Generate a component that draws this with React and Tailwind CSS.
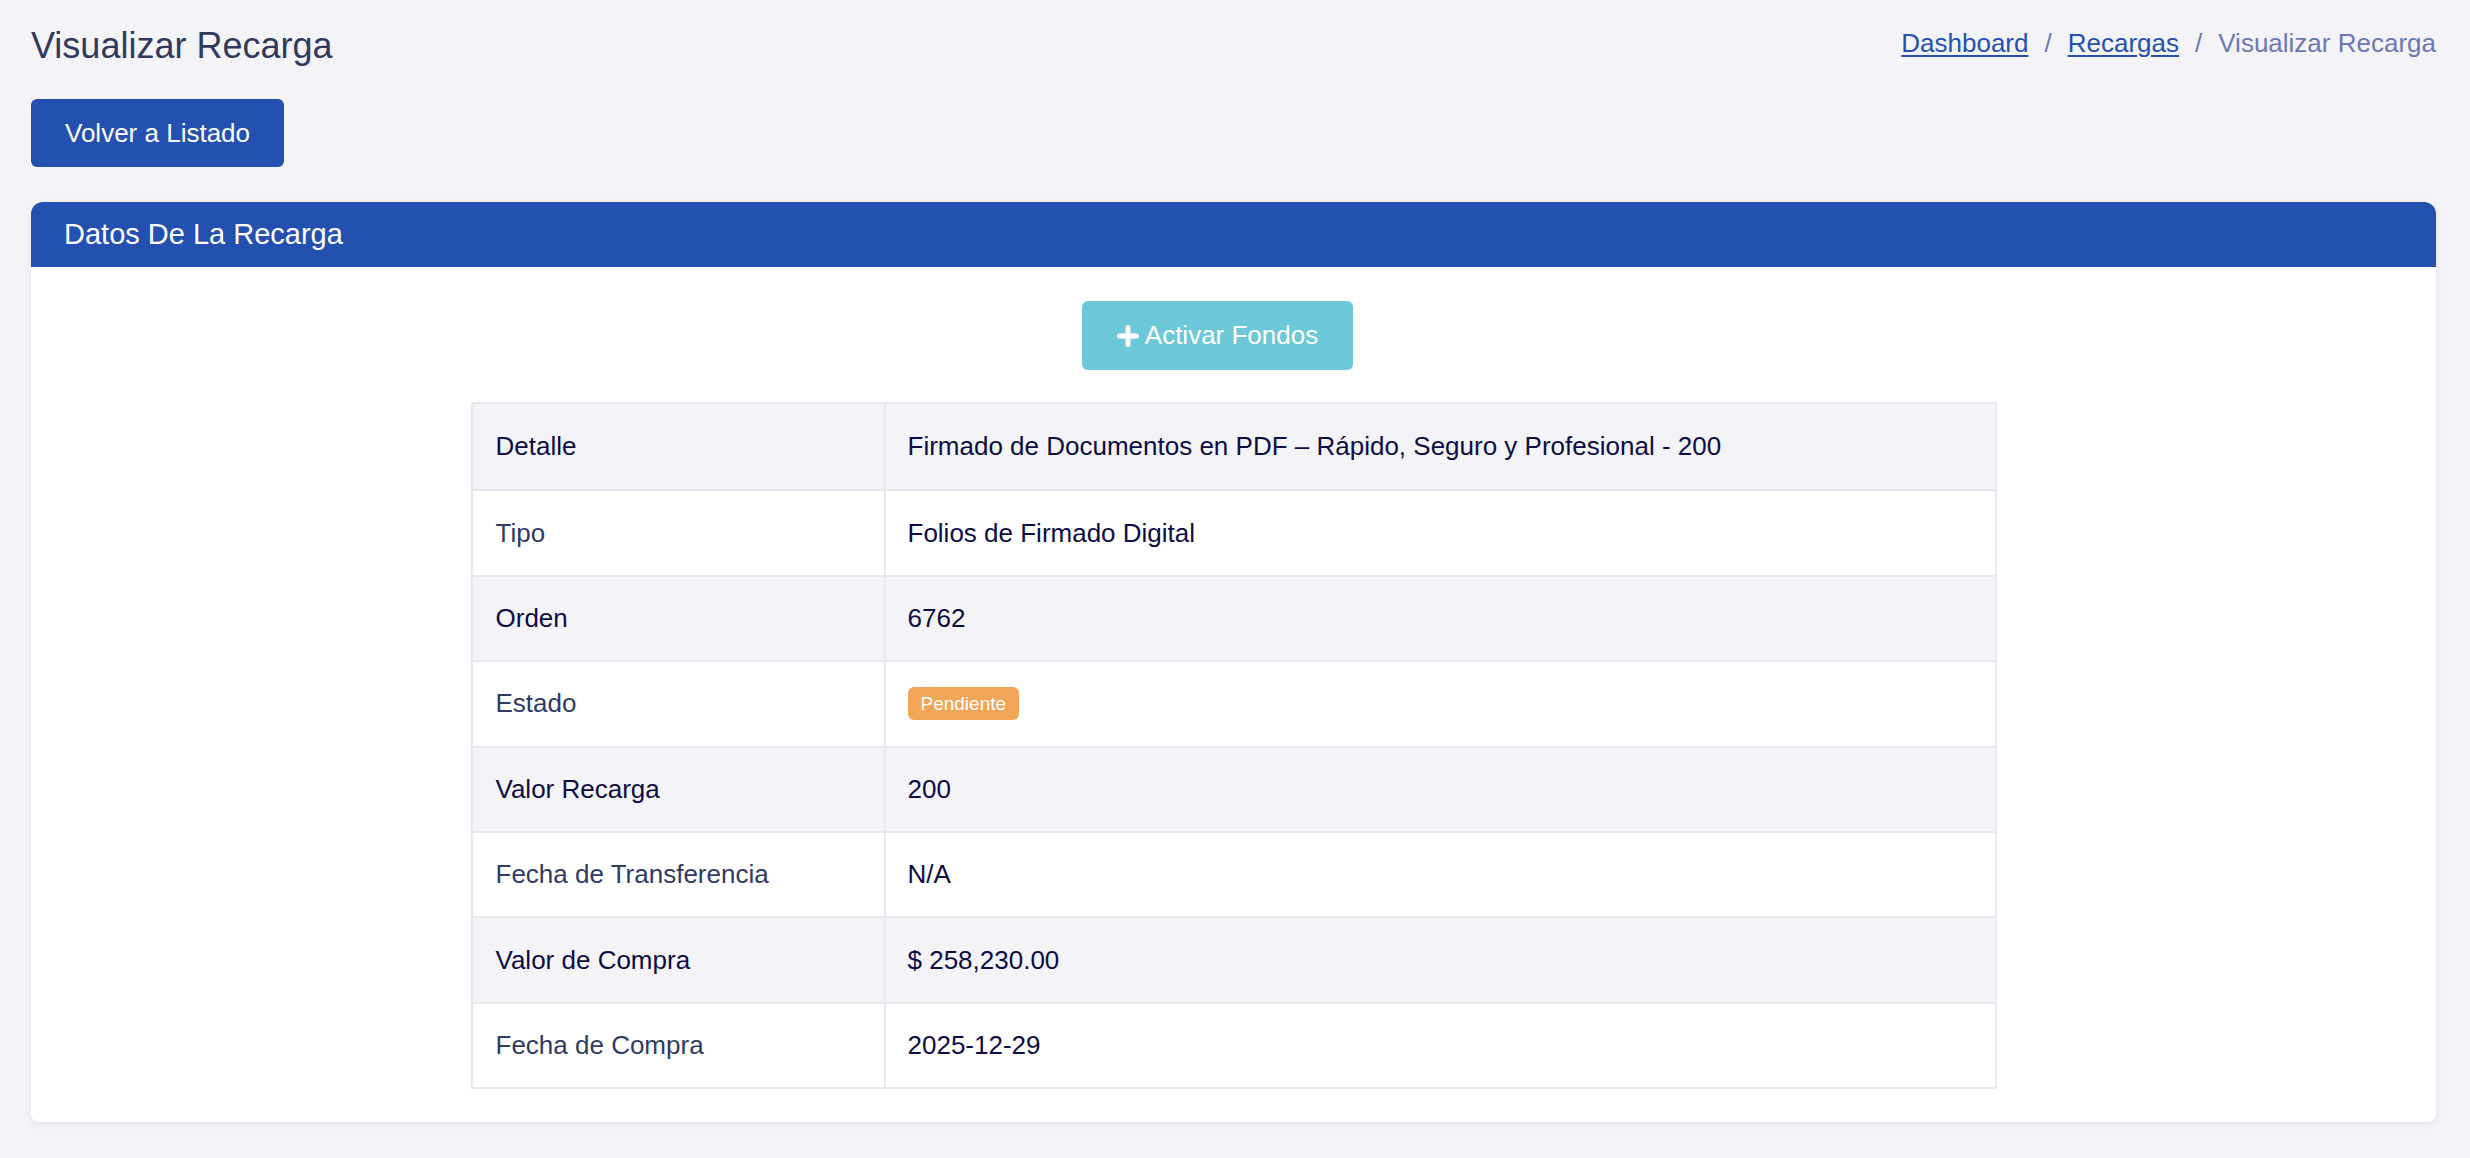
import React from 'react';

const rows = [
  { label: 'Detalle', value: 'Firmado de Documentos en PDF – Rápido, Seguro y Profesional - 200' },
  { label: 'Tipo', value: 'Folios de Firmado Digital' },
  { label: 'Orden', value: '6762' },
  { label: 'Estado', badge: 'Pendiente' },
  { label: 'Valor Recarga', value: '200' },
  { label: 'Fecha de Transferencia', value: 'N/A' },
  { label: 'Valor de Compra', value: '$ 258,230.00' },
  { label: 'Fecha de Compra', value: '2025-12-29' },
];

function PlusIcon() {
  return (
    <svg width="22" height="22" viewBox="0 0 22 22" className="shrink-0">
      <path d="M11 2.5v17M2.5 11h17" stroke="white" strokeWidth="5" strokeLinecap="round" />
    </svg>
  );
}

export default function App() {
  return (
    <div className="min-h-screen bg-[#f4f4f8] pl-[31px] pr-[34px] pt-[24px] pb-[36px] font-['Liberation_Sans',Arial,sans-serif]">
      {/* Encabezado */}
      <div className="flex justify-between items-start">
        <h1 className="text-[36px] leading-[43px] text-[#2f3a5e] font-normal">Visualizar Recarga</h1>
        <nav className="mt-[4px] flex items-baseline text-[26px] leading-[31px]">
          <a href="#" className="text-[#2450b0] underline underline-offset-[3px]">Dashboard</a>
          <span className="px-[16px] text-[#6b78b3]">/</span>
          <a href="#" className="text-[#2450b0] underline underline-offset-[3px]">Recargas</a>
          <span className="px-[16px] text-[#6b78b3]">/</span>
          <span className="text-[#6b78b3]">Visualizar Recarga</span>
        </nav>
      </div>

      <button className="mt-[32px] h-[68px] px-[34px] bg-[#2450b0] text-white text-[26px] rounded-[6px] flex items-center">
        Volver a Listado
      </button>

      {/* Card */}
      <div className="mt-[35px] bg-white rounded-t-[12px] rounded-b-[8px] shadow-[0_2px_8px_rgba(60,60,110,0.10)]">
        <div className="h-[65px] bg-[#2450b0] rounded-t-[12px] px-[33px] flex items-center">
          <h2 className="text-[29px] text-white font-normal">Datos De La Recarga</h2>
        </div>

        <div className="pt-[34px] pb-[33px]">
          <div className="flex justify-center">
            <button className="mr-[32px] h-[69px] w-[271px] bg-[#6cc8d8] rounded-[6px] text-white text-[26px] flex items-center justify-center gap-[6px]">
              <PlusIcon />
              <span>Activar Fondos</span>
            </button>
          </div>

          <div className="mt-[32px] w-[1526px] mx-auto border-2 border-[#e6e8f0]">
            {rows.map((row, i) => {
              const striped = i % 2 === 0;
              return (
                <div
                  key={row.label}
                  className={`flex h-[85.4px] text-[26px] ${i > 0 ? 'border-t-2 border-[#e6e8f0]' : ''} ${striped ? 'bg-[#f4f4f8]' : 'bg-white'}`}
                >
                  <div className={`w-[413px] shrink-0 px-[23px] flex items-center border-r-2 border-[#e6e8f0] ${striped ? 'text-[#0d0c46]' : 'text-[#2f3a66]'}`}>
                    {row.label}
                  </div>
                  <div className="flex-1 px-[22px] flex items-center text-[#0d0c46]">
                    {row.badge ? (
                      <span className="h-[33px] px-[13px] rounded-[6px] bg-[#f0a557] text-white text-[19px] font-normal flex items-center">
                        {row.badge}
                      </span>
                    ) : (
                      row.value
                    )}
                  </div>
                </div>
              );
            })}
          </div>
        </div>
      </div>
    </div>
  );
}
